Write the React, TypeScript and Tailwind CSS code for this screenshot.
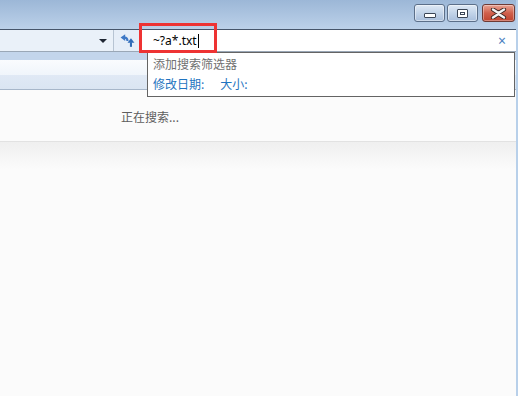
const sans = "font-['Segoe_UI','Noto_Sans','Noto_Sans_CJK_SC',sans-serif]"
const cjk = "font-['Noto_Sans_CJK_SC','Noto_Sans',sans-serif]"

const CaptionButton = ({ kind }: { kind: 'min' | 'max' | 'close' }) => {
  const isClose = kind === 'close'
  return (
    <div
      className={
        isClose
          ? 'flex items-center justify-center w-[33px] h-[18px] rounded-[3px] border border-[#6e3a34] bg-gradient-to-b from-[#e8a393] via-[#d0604c] to-[#c0432e] shadow-[inset_0_0_0_1px_rgba(255,255,255,0.35)]'
          : 'flex items-center justify-center w-[31px] h-[18px] rounded-[3px] border border-[#5c6f89] bg-gradient-to-b from-[#dfe9f5] via-[#c3d4e9] to-[#a9bfdc] shadow-[inset_0_0_0_1px_rgba(255,255,255,0.45)]'
      }
    >
      {kind === 'min' && (
        <div className="mt-[5px] w-[12px] h-[5px] rounded-[1px] border border-[#3b4656] bg-white" />
      )}
      {kind === 'max' && (
        <div className="flex items-center justify-center w-[11px] h-[9px] rounded-[1px] border border-[#3b4656] bg-white">
          <div className="w-[5px] h-[3px] border border-[#3b4656]" />
        </div>
      )}
      {kind === 'close' && (
        <svg width="17" height="11" viewBox="0 0 17 11">
          <path
            d="M3 1.5 L8.5 5 L14 1.5 M3 9.5 L8.5 6 L14 9.5"
            fill="none"
            stroke="#3a2420"
            strokeWidth="4.2"
            strokeLinecap="round"
          />
          <path
            d="M3 1.5 L8.5 5 L14 1.5 M3 9.5 L8.5 6 L14 9.5"
            fill="none"
            stroke="#f4f4f4"
            strokeWidth="2.4"
            strokeLinecap="round"
          />
        </svg>
      )}
    </div>
  )
}

// go-to / refresh arrows, as in the Explorer address bar
const RefreshIcon = () => (
  <svg width="15" height="13" viewBox="0 0 13 11">
    <path d="M0.5 3 L4.5 0 L4.5 6 Z" fill="#3d78c6" />
    <path d="M4 3 Q6.5 3 6.5 6" fill="none" stroke="#3d78c6" strokeWidth="1.8" />
    <path d="M9.5 3.5 L12.5 7.5 L6.5 7.5 Z" fill="#2f6bb8" />
    <path d="M9.5 7 L9.5 11" fill="none" stroke="#2f6bb8" strokeWidth="1.8" />
  </svg>
)

export default function App() {
  return (
    <div className={`relative flex w-[518px] h-[396px] overflow-hidden bg-[#fbfbfb] ${sans}`}>
      <div className="flex flex-col flex-1 min-w-0">
        {/* title bar */}
        <div className="flex justify-end items-start h-[29px] pt-[4px] pr-[1px] gap-[2px] bg-gradient-to-b from-[#9cb7d7] to-[#bcd1e9]">
          <CaptionButton kind="min" />
          <CaptionButton kind="max" />
          <div className="ml-[2px]">
            <CaptionButton kind="close" />
          </div>
        </div>

        {/* address + search row */}
        <div className="flex h-[23px] border-t border-b border-t-[#46556a] border-b-[#9aa7b6]">
          <div className="flex items-center justify-end flex-1 pr-[6px] bg-[#eaf1f9]">
            <div className="w-0 h-0 border-l-[4px] border-r-[4px] border-t-[4px] border-l-transparent border-r-transparent border-t-[#1e2633]" />
          </div>
          <div className="flex items-center justify-center w-[28px] border-l border-[#b7c4d3] bg-[#e6eef8]">
            <RefreshIcon />
          </div>
          <div className="flex items-center w-[375px] pl-[11px] pr-[10px] border-l border-[#8e9aa8] bg-white">
            <span className="text-[12px] text-black leading-none">~?a*.txt</span>
            <div className="w-px h-[14px] bg-black ml-px" />
            <span className="ml-auto text-[14px] text-[#4a7fc0] leading-none">×</span>
          </div>
        </div>

        {/* command bar */}
        <div className="h-[8px] bg-[#c3d5eb]" />
        <div className="flex flex-col h-[30px] border-b border-[#a7b7ca]">
          <div className="h-[15px] bg-gradient-to-b from-[#fafcfe] to-[#f0f5fb]" />
          <div className="h-[15px] bg-gradient-to-b from-[#e0e9f5] to-[#dae5f2]" />
        </div>

        {/* results */}
        <div className="flex flex-col flex-1 bg-[#fbfbfb]">
          <div className="h-[51px] pl-[121px] pt-[14px]">
            <span className={`${cjk} text-[12px] leading-[16px] text-[#5e5e5e]`}>正在搜索...</span>
          </div>
          <div className="h-[28px] border-t border-[#e2e2e2] bg-gradient-to-b from-[#efefef] to-[#fbfbfb]" />
          <div className="flex-1" />
        </div>
      </div>
      <div className="w-[2px] bg-[#b8d0ea]" />

      {/* search suggestions popup */}
      <div
        className={`absolute left-[147px] top-[52px] w-[368px] h-[45px] border border-[#646464] bg-white pl-[5px] pt-[1px] ${cjk} text-[12px] leading-[20px]`}
      >
        <div className="text-[#707070]">添加搜索筛选器</div>
        <div className="flex gap-[16px] text-[#1f74c0]">
          <span>修改日期:</span>
          <span>大小:</span>
        </div>
      </div>

      {/* highlight */}
      <div className="absolute left-[139px] top-[23px] w-[78px] h-[30px] border-[3px] border-[#ee3333]" />
    </div>
  )
}
